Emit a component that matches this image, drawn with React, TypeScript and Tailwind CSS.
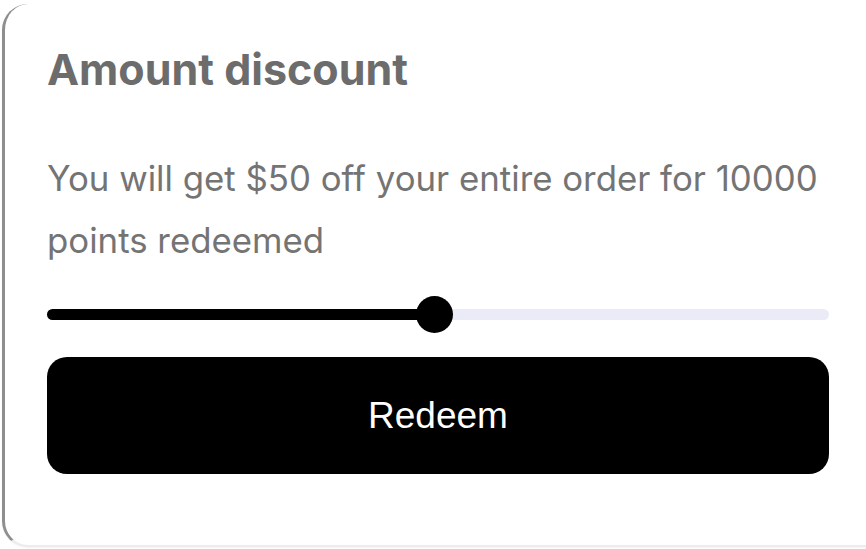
export default function App() {
  const value = 49.5;
  return (
    <div className="h-[549px] w-[866px] overflow-hidden bg-white">
      <div className="ml-[2px] mt-[4px] h-[543px] w-[900px] rounded-l-[26px] border-l-[3px] border-b-[2px] border-l-[#8e8e8e] border-b-[#ececec] bg-white pl-[42px] pt-[43px] shadow-[0_1px_2px_rgba(0,0,0,0.05)]">
        <div className="w-[782px]" style={{ fontFamily: "Inter, 'Noto Sans', sans-serif" }}>
          <h2 className="text-[43px] font-bold leading-[44px] text-[#6c6c6c]">Amount discount</h2>
          <p className="mt-[56px] text-[34.8px] leading-[62px] text-[#747474]">
            You will get $50 off your entire order for 10000 points redeemed
          </p>
          <div className="mt-[25px] flex h-[37px] items-center">
            <div className="h-[11px] shrink-0 rounded-l-full bg-black" style={{ width: `${value}%` }} />
            <div className="relative z-10 -mx-[18px] h-[37px] w-[37px] shrink-0 rounded-full bg-black" />
            <div className="h-[11px] flex-1 rounded-r-full bg-[#ebebf8]" />
          </div>
          <button
            className="mt-[24px] flex h-[117px] w-full items-center justify-center rounded-[20px] bg-black text-[37px] text-white"
            style={{ fontFamily: "'Liberation Sans', Arial, sans-serif" }}
          >
            Redeem
          </button>
        </div>
      </div>
    </div>
  );
}
